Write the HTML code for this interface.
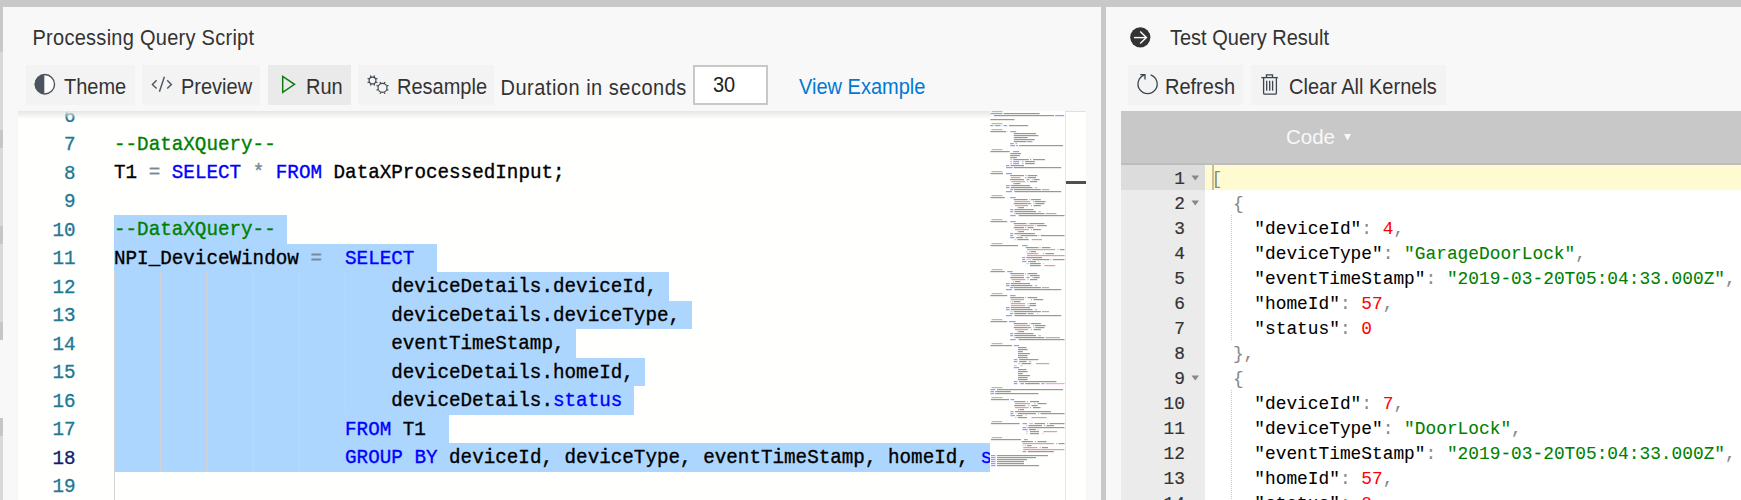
<!DOCTYPE html>
<html><head><meta charset="utf-8">
<style>
*{margin:0;padding:0;box-sizing:border-box}
html,body{width:1741px;height:500px;overflow:hidden;background:#c8c8c8;font-family:"Liberation Sans",sans-serif}
.abs{position:absolute}
.panel{position:absolute;background:#f8f8f8}
.t{position:absolute;font-size:20px;line-height:20px;color:#333;white-space:nowrap;transform:scaleY(1.1);transform-origin:0 17px}
.btn{position:absolute;background:#f3f3f3;height:40px;top:65px}
.ed{position:absolute;left:18px;top:111px;width:1068px;height:389px;background:#fffffe;overflow:hidden}
.code{position:absolute;-webkit-text-stroke:0.35px currentColor;transform:scaleY(1.07);transform-origin:0 0;font-family:"Liberation Mono",monospace;font-size:19.25px;line-height:28.5px;white-space:pre;color:#000}
.ln{position:absolute;-webkit-text-stroke:0.3px currentColor;transform:scaleY(1.07);transform-origin:0 0;font-family:"Liberation Mono",monospace;font-size:19.2px;line-height:28.5px;color:#237893;text-align:right;width:57.5px;left:0}
.sel{position:absolute;background:#add6ff}
.guide{position:absolute;width:1px;background:#d3d3d3}
.c{color:#008000}.k{color:#0000ff}.o{color:#778899}
.rc{position:absolute;left:1121px;top:111px;width:620px;height:389px;background:#fff;overflow:hidden}
.j{position:absolute;-webkit-text-stroke:0.08px currentColor;transform:scaleY(1.08);transform-origin:0 0;font-family:"Liberation Mono",monospace;font-size:17.83px;line-height:25px;white-space:pre;color:#000}
.jn{position:absolute;-webkit-text-stroke:0.2px currentColor;transform:scaleY(1.08);transform-origin:0 0;font-family:"Liberation Mono",monospace;font-size:17.83px;line-height:25px;color:#333;text-align:right;width:64px;left:0}
.act{color:#0b216f}
.p{color:#888}.n{color:#ff0000}.s{color:#008000}
</style></head><body>
<!-- left scroll strip -->
<div class="abs" style="left:0;top:52px;width:3px;height:78px;background:#d9d9d9"></div><div class="abs" style="left:0;top:130px;width:3px;height:18px;background:#c6c6c6"></div><div class="abs" style="left:0;top:148px;width:3px;height:78px;background:#d9d9d9"></div><div class="abs" style="left:0;top:226px;width:3px;height:18px;background:#c6c6c6"></div><div class="abs" style="left:0;top:244px;width:3px;height:78px;background:#d9d9d9"></div><div class="abs" style="left:0;top:322px;width:3px;height:18px;background:#c6c6c6"></div><div class="abs" style="left:0;top:340px;width:3px;height:78px;background:#f8f8f8"></div><div class="abs" style="left:0;top:418px;width:3px;height:18px;background:#c6c6c6"></div><div class="abs" style="left:0;top:436px;width:3px;height:64px;background:#d9d9d9"></div>
<!-- left panel -->
<div class="panel" style="left:3px;top:7px;width:1098px;height:493px"></div>
<!-- right panel -->
<div class="panel" style="left:1106px;top:7px;width:635px;height:493px"></div>

<div class="t" style="left:32.5px;top:27.5px;letter-spacing:0.27px">Processing Query Script</div>

<div class="btn" style="left:26px;width:109px"></div>
<div class="btn" style="left:142px;width:118px"></div>
<div class="btn" style="left:268px;width:83px;background:#eaeaea"></div>
<div class="btn" style="left:358px;width:136px"></div>

<div class="t" style="left:64px;top:76.7px">Theme</div>
<div class="t" style="left:181px;top:76.7px">Preview</div>
<div class="t" style="left:306px;top:76.7px">Run</div>
<div class="t" style="left:397px;top:76.7px">Resample</div>
<div class="t" style="left:500.5px;top:77.5px;letter-spacing:0.5px">Duration in seconds</div>
<div class="abs" style="left:693px;top:65px;width:75px;height:40px;background:#fff;border:2px solid #c8c8c8"></div>
<div class="t" style="left:713px;top:75px;color:#222">30</div>
<div class="t" style="left:799px;top:76.7px;color:#0078d4">View Example</div>




<!-- editor -->
<div class="ed">
<!--ED-->
<div class="sel" style="left:96px;top:104.00px;width:173.28px;height:28.6px"></div>
<div class="sel" style="left:96px;top:132.50px;width:323.46px;height:28.6px"></div>
<div class="sel" style="left:96px;top:161.00px;width:554.50px;height:28.6px"></div>
<div class="sel" style="left:96px;top:189.50px;width:577.60px;height:28.6px"></div>
<div class="sel" style="left:96px;top:218.00px;width:462.08px;height:28.6px"></div>
<div class="sel" style="left:96px;top:246.50px;width:531.39px;height:28.6px"></div>
<div class="sel" style="left:96px;top:275.00px;width:519.84px;height:28.6px"></div>
<div class="sel" style="left:96px;top:303.50px;width:335.01px;height:28.6px"></div>
<div class="sel" style="left:96px;top:332.00px;width:924.16px;height:28.6px"></div>
<div class="guide" style="left:96.00px;top:161.00px;height:28.6px"></div>
<div class="guide" style="left:142.20px;top:161.00px;height:28.6px"></div>
<div class="guide" style="left:188.40px;top:161.00px;height:28.6px"></div>
<div class="guide" style="left:234.60px;top:161.00px;height:28.6px"></div>
<div class="guide" style="left:280.80px;top:161.00px;height:28.6px"></div>
<div class="guide" style="left:327.00px;top:161.00px;height:28.6px"></div>
<div class="guide" style="left:96.00px;top:189.50px;height:28.6px"></div>
<div class="guide" style="left:142.20px;top:189.50px;height:28.6px"></div>
<div class="guide" style="left:188.40px;top:189.50px;height:28.6px"></div>
<div class="guide" style="left:234.60px;top:189.50px;height:28.6px"></div>
<div class="guide" style="left:280.80px;top:189.50px;height:28.6px"></div>
<div class="guide" style="left:327.00px;top:189.50px;height:28.6px"></div>
<div class="guide" style="left:96.00px;top:218.00px;height:28.6px"></div>
<div class="guide" style="left:142.20px;top:218.00px;height:28.6px"></div>
<div class="guide" style="left:188.40px;top:218.00px;height:28.6px"></div>
<div class="guide" style="left:234.60px;top:218.00px;height:28.6px"></div>
<div class="guide" style="left:280.80px;top:218.00px;height:28.6px"></div>
<div class="guide" style="left:327.00px;top:218.00px;height:28.6px"></div>
<div class="guide" style="left:96.00px;top:246.50px;height:28.6px"></div>
<div class="guide" style="left:142.20px;top:246.50px;height:28.6px"></div>
<div class="guide" style="left:188.40px;top:246.50px;height:28.6px"></div>
<div class="guide" style="left:234.60px;top:246.50px;height:28.6px"></div>
<div class="guide" style="left:280.80px;top:246.50px;height:28.6px"></div>
<div class="guide" style="left:327.00px;top:246.50px;height:28.6px"></div>
<div class="guide" style="left:96.00px;top:275.00px;height:28.6px"></div>
<div class="guide" style="left:142.20px;top:275.00px;height:28.6px"></div>
<div class="guide" style="left:188.40px;top:275.00px;height:28.6px"></div>
<div class="guide" style="left:234.60px;top:275.00px;height:28.6px"></div>
<div class="guide" style="left:280.80px;top:275.00px;height:28.6px"></div>
<div class="guide" style="left:327.00px;top:275.00px;height:28.6px"></div>
<div class="guide" style="left:96.00px;top:303.50px;height:28.6px"></div>
<div class="guide" style="left:142.20px;top:303.50px;height:28.6px"></div>
<div class="guide" style="left:188.40px;top:303.50px;height:28.6px"></div>
<div class="guide" style="left:234.60px;top:303.50px;height:28.6px"></div>
<div class="guide" style="left:280.80px;top:303.50px;height:28.6px"></div>
<div class="guide" style="left:96.00px;top:332.00px;height:28.6px"></div>
<div class="guide" style="left:142.20px;top:332.00px;height:28.6px"></div>
<div class="guide" style="left:188.40px;top:332.00px;height:28.6px"></div>
<div class="guide" style="left:234.60px;top:332.00px;height:28.6px"></div>
<div class="guide" style="left:280.80px;top:332.00px;height:28.6px"></div>
<div class="guide" style="left:96.00px;top:360.50px;height:28.6px"></div>
<div class="guide" style="left:96.00px;top:389.00px;height:28.6px"></div>
<div class="ln" style="top:-9.50px">6</div>
<div class="ln" style="top:19.00px">7</div>
<div class="ln" style="top:47.50px">8</div>
<div class="ln" style="top:76.00px">9</div>
<div class="ln" style="top:104.50px">10</div>
<div class="ln" style="top:133.00px">11</div>
<div class="ln" style="top:161.50px">12</div>
<div class="ln" style="top:190.00px">13</div>
<div class="ln" style="top:218.50px">14</div>
<div class="ln" style="top:247.00px">15</div>
<div class="ln" style="top:275.50px">16</div>
<div class="ln" style="top:304.00px">17</div>
<div class="ln act" style="top:332.50px">18</div>
<div class="ln" style="top:361.00px">19</div>
<div class="ln" style="top:389.50px">20</div>
<div class="code" style="left:96px;top:18.50px"><span class="c">--DataXQuery--</span></div>
<div class="code" style="left:96px;top:47.00px">T1 <span class="o">=</span> <span class="k">SELECT</span> <span class="o">*</span> <span class="k">FROM</span> DataXProcessedInput;</div>
<div class="code" style="left:96px;top:104.00px"><span class="c">--DataXQuery--</span></div>
<div class="code" style="left:96px;top:132.50px">NPI_DeviceWindow <span class="o">=</span>  <span class="k">SELECT</span></div>
<div class="code" style="left:96px;top:161.00px">                        deviceDetails.deviceId,</div>
<div class="code" style="left:96px;top:189.50px">                        deviceDetails.deviceType,</div>
<div class="code" style="left:96px;top:218.00px">                        eventTimeStamp,</div>
<div class="code" style="left:96px;top:246.50px">                        deviceDetails.homeId,</div>
<div class="code" style="left:96px;top:275.00px">                        deviceDetails.<span class="k">status</span></div>
<div class="code" style="left:96px;top:303.50px">                    <span class="k">FROM</span> T1</div>
<div class="code" style="left:96px;top:332.00px">                    <span class="k">GROUP</span> <span class="k">BY</span> deviceId, deviceType, eventTimeStamp, homeId, <span class="k">status</span></div>
<div class="abs" style="left:972px;top:0;width:75px;height:389px;background:#fffffe"></div><svg class="abs" style="left:972px;top:0" width="75" height="389"><g opacity="0.4"><rect x="1.6" y="0.0" width="10.8" height="1.2" fill="#008000"/><rect x="0.4" y="2.0" width="12.0" height="1.2" fill="#0000ff"/><rect x="13.6" y="2.0" width="36.0" height="1.2" fill="#000000"/><rect x="4.0" y="4.0" width="60.0" height="1.2" fill="#000000"/><rect x="65.2" y="4.0" width="9.0" height="1.2" fill="#0000ff"/><rect x="0.4" y="8.0" width="24.0" height="1.2" fill="#000000"/><rect x="1.6" y="12.0" width="10.8" height="1.2" fill="#008000"/><rect x="0.4" y="14.0" width="2.4" height="1.2" fill="#000000"/><rect x="3.4" y="14.0" width="1.2" height="1.2" fill="#778899"/><rect x="5.2" y="14.0" width="5.4" height="1.2" fill="#0000ff"/><rect x="11.8" y="14.0" width="0.6" height="1.2" fill="#778899"/><rect x="13.6" y="14.0" width="3.6" height="1.2" fill="#0000ff"/><rect x="19.0" y="14.0" width="19.2" height="1.2" fill="#000000"/><rect x="1.6" y="18.0" width="10.8" height="1.2" fill="#008000"/><rect x="0.4" y="20.0" width="15.6" height="1.2" fill="#000000"/><rect x="17.2" y="20.0" width="0.6" height="1.2" fill="#778899"/><rect x="20.2" y="20.0" width="6.0" height="1.2" fill="#0000ff"/><rect x="23.8" y="22.0" width="22.2" height="1.2" fill="#000000"/><rect x="23.8" y="24.0" width="24.6" height="1.2" fill="#000000"/><rect x="23.8" y="26.0" width="13.8" height="1.2" fill="#000000"/><rect x="23.8" y="28.0" width="21.0" height="1.2" fill="#000000"/><rect x="23.8" y="30.0" width="12.6" height="1.2" fill="#000000"/><rect x="37.0" y="30.0" width="5.4" height="1.2" fill="#0000ff"/><rect x="20.2" y="32.0" width="3.6" height="1.2" fill="#0000ff"/><rect x="25.6" y="32.0" width="1.2" height="1.2" fill="#000000"/><rect x="20.2" y="34.0" width="4.8" height="1.2" fill="#0000ff"/><rect x="26.2" y="34.0" width="1.8" height="1.2" fill="#0000ff"/><rect x="29.2" y="34.0" width="43.8" height="1.2" fill="#000000"/><rect x="1.6" y="38.0" width="10.8" height="1.2" fill="#008000"/><rect x="0.4" y="40.0" width="19.2" height="1.2" fill="#000000"/><rect x="23.2" y="40.0" width="6.0" height="1.2" fill="#0000ff"/><rect x="20.2" y="42.0" width="10.8" height="1.2" fill="#000000"/><rect x="20.2" y="44.0" width="9.6" height="1.2" fill="#000000"/><rect x="20.2" y="46.0" width="6.6" height="1.2" fill="#000000"/><rect x="20.2" y="48.0" width="1.8" height="1.2" fill="#ff00ff"/><rect x="23.2" y="48.0" width="15.6" height="1.2" fill="#000000"/><rect x="40.0" y="48.0" width="1.2" height="1.2" fill="#0000ff"/><rect x="43.0" y="48.0" width="12.0" height="1.2" fill="#000000"/><rect x="20.2" y="50.0" width="1.8" height="1.2" fill="#ff00ff"/><rect x="23.2" y="50.0" width="6.0" height="1.2" fill="#0000ff"/><rect x="32.2" y="50.0" width="1.2" height="1.2" fill="#0000ff"/><rect x="35.2" y="50.0" width="9.6" height="1.2" fill="#000000"/><rect x="20.2" y="52.0" width="1.8" height="1.2" fill="#ff00ff"/><rect x="23.2" y="52.0" width="6.0" height="1.2" fill="#0000ff"/><rect x="32.2" y="52.0" width="1.2" height="1.2" fill="#0000ff"/><rect x="35.2" y="52.0" width="9.6" height="1.2" fill="#000000"/><rect x="16.0" y="54.0" width="3.6" height="1.2" fill="#0000ff"/><rect x="20.8" y="54.0" width="13.2" height="1.2" fill="#000000"/><rect x="16.0" y="56.0" width="6.6" height="1.2" fill="#0000ff"/><rect x="23.8" y="56.0" width="47.4" height="1.2" fill="#000000"/><rect x="1.6" y="60.0" width="10.8" height="1.2" fill="#008000"/><rect x="0.4" y="62.0" width="12.6" height="1.2" fill="#000000"/><rect x="16.0" y="62.0" width="6.0" height="1.2" fill="#0000ff"/><rect x="20.2" y="64.0" width="13.8" height="1.2" fill="#000000"/><rect x="35.2" y="64.0" width="1.2" height="1.2" fill="#0000ff"/><rect x="37.6" y="64.0" width="9.6" height="1.2" fill="#000000"/><rect x="20.8" y="66.0" width="9.6" height="1.2" fill="#a31515"/><rect x="35.2" y="66.0" width="1.2" height="1.2" fill="#0000ff"/><rect x="37.6" y="66.0" width="8.4" height="1.2" fill="#000000"/><rect x="20.2" y="68.0" width="13.8" height="1.2" fill="#000000"/><rect x="36.4" y="68.0" width="3.0" height="1.2" fill="#0000ff"/><rect x="41.8" y="68.0" width="0.8" height="1.2" fill="#0000ff"/><rect x="43.6" y="68.0" width="6.0" height="1.2" fill="#000000"/><rect x="21.4" y="70.0" width="13.8" height="1.2" fill="#a31515"/><rect x="37.6" y="70.0" width="0.8" height="1.2" fill="#0000ff"/><rect x="40.0" y="70.0" width="7.2" height="1.2" fill="#000000"/><rect x="23.2" y="72.0" width="0.8" height="1.2" fill="#0000ff"/><rect x="24.4" y="72.0" width="6.0" height="1.2" fill="#000000"/><rect x="16.0" y="74.0" width="3.6" height="1.2" fill="#0000ff"/><rect x="20.8" y="74.0" width="19.2" height="1.2" fill="#000000"/><rect x="16.0" y="76.0" width="3.6" height="1.2" fill="#0000ff"/><rect x="20.8" y="76.0" width="21.6" height="1.2" fill="#000000"/><rect x="44.8" y="76.0" width="2.4" height="1.2" fill="#09885a"/><rect x="20.2" y="78.0" width="3.0" height="1.2" fill="#0000ff"/><rect x="23.8" y="78.0" width="27.0" height="1.2" fill="#000000"/><rect x="52.0" y="78.0" width="7.2" height="1.2" fill="#a31515"/><rect x="16.0" y="80.0" width="6.0" height="1.2" fill="#0000ff"/><rect x="24.4" y="80.0" width="46.8" height="1.2" fill="#000000"/><rect x="1.6" y="84.0" width="10.8" height="1.2" fill="#008000"/><rect x="0.4" y="86.0" width="14.4" height="1.2" fill="#000000"/><rect x="20.2" y="86.0" width="5.4" height="1.2" fill="#0000ff"/><rect x="23.8" y="88.0" width="13.8" height="1.2" fill="#000000"/><rect x="39.4" y="88.0" width="0.8" height="1.2" fill="#0000ff"/><rect x="41.2" y="88.0" width="9.6" height="1.2" fill="#000000"/><rect x="24.4" y="90.0" width="15.6" height="1.2" fill="#a31515"/><rect x="43.0" y="90.0" width="0.8" height="1.2" fill="#0000ff"/><rect x="44.8" y="90.0" width="10.8" height="1.2" fill="#000000"/><rect x="23.8" y="92.0" width="13.8" height="1.2" fill="#000000"/><rect x="37.6" y="92.0" width="3.6" height="1.2" fill="#0000ff"/><rect x="43.6" y="92.0" width="0.8" height="1.2" fill="#0000ff"/><rect x="45.4" y="92.0" width="9.0" height="1.2" fill="#000000"/><rect x="25.0" y="94.0" width="13.2" height="1.2" fill="#a31515"/><rect x="41.2" y="94.0" width="0.8" height="1.2" fill="#0000ff"/><rect x="43.6" y="94.0" width="7.2" height="1.2" fill="#000000"/><rect x="27.4" y="96.0" width="0.8" height="1.2" fill="#0000ff"/><rect x="28.6" y="96.0" width="5.4" height="1.2" fill="#000000"/><rect x="20.2" y="98.0" width="3.0" height="1.2" fill="#0000ff"/><rect x="24.4" y="98.0" width="19.2" height="1.2" fill="#000000"/><rect x="20.2" y="100.0" width="3.0" height="1.2" fill="#0000ff"/><rect x="24.4" y="100.0" width="21.6" height="1.2" fill="#000000"/><rect x="48.4" y="100.0" width="2.4" height="1.2" fill="#09885a"/><rect x="24.4" y="102.0" width="0.8" height="1.2" fill="#0000ff"/><rect x="25.6" y="102.0" width="28.8" height="1.2" fill="#000000"/><rect x="55.6" y="102.0" width="10.8" height="1.2" fill="#a31515"/><rect x="20.2" y="104.0" width="5.4" height="1.2" fill="#0000ff"/><rect x="28.6" y="104.0" width="45.9" height="1.2" fill="#000000"/><rect x="1.6" y="108.0" width="10.8" height="1.2" fill="#008000"/><rect x="0.4" y="110.0" width="16.8" height="1.2" fill="#000000"/><rect x="20.2" y="110.0" width="5.4" height="1.2" fill="#0000ff"/><rect x="23.8" y="112.0" width="12.6" height="1.2" fill="#000000"/><rect x="37.6" y="112.0" width="0.8" height="1.2" fill="#0000ff"/><rect x="39.4" y="112.0" width="15.0" height="1.2" fill="#000000"/><rect x="24.4" y="114.0" width="19.2" height="1.2" fill="#a31515"/><rect x="44.8" y="114.0" width="0.8" height="1.2" fill="#0000ff"/><rect x="47.2" y="114.0" width="9.6" height="1.2" fill="#000000"/><rect x="23.8" y="116.0" width="10.2" height="1.2" fill="#000000"/><rect x="35.2" y="116.0" width="0.8" height="1.2" fill="#0000ff"/><rect x="37.6" y="116.0" width="6.0" height="1.2" fill="#000000"/><rect x="25.0" y="118.0" width="13.8" height="1.2" fill="#a31515"/><rect x="41.2" y="118.0" width="0.8" height="1.2" fill="#0000ff"/><rect x="43.0" y="118.0" width="7.8" height="1.2" fill="#000000"/><rect x="27.4" y="120.0" width="0.8" height="1.2" fill="#0000ff"/><rect x="28.6" y="120.0" width="5.4" height="1.2" fill="#000000"/><rect x="20.2" y="122.0" width="3.0" height="1.2" fill="#0000ff"/><rect x="24.4" y="122.0" width="20.4" height="1.2" fill="#000000"/><rect x="20.2" y="124.0" width="3.0" height="1.2" fill="#0000ff"/><rect x="27.4" y="124.0" width="1.8" height="1.2" fill="#778899"/><rect x="30.4" y="124.0" width="16.8" height="1.2" fill="#000000"/><rect x="48.4" y="124.0" width="0.8" height="1.2" fill="#0000ff"/><rect x="50.8" y="124.0" width="23.7" height="1.2" fill="#000000"/><rect x="20.2" y="126.0" width="4.2" height="1.2" fill="#0000ff"/><rect x="26.2" y="126.0" width="6.6" height="1.2" fill="#000000"/><rect x="35.2" y="126.0" width="2.4" height="1.2" fill="#09885a"/><rect x="24.4" y="128.0" width="1.8" height="1.2" fill="#778899"/><rect x="27.4" y="128.0" width="11.4" height="1.2" fill="#000000"/><rect x="41.8" y="128.0" width="10.2" height="1.2" fill="#a31515"/><rect x="1.6" y="132.0" width="10.8" height="1.2" fill="#008000"/><rect x="0.4" y="134.0" width="27.6" height="1.2" fill="#000000"/><rect x="32.2" y="134.0" width="5.4" height="1.2" fill="#0000ff"/><rect x="35.8" y="136.0" width="12.6" height="1.2" fill="#000000"/><rect x="49.6" y="136.0" width="0.8" height="1.2" fill="#0000ff"/><rect x="52.0" y="136.0" width="8.4" height="1.2" fill="#000000"/><rect x="37.0" y="138.0" width="28.2" height="1.2" fill="#a31515"/><rect x="67.6" y="138.0" width="0.8" height="1.2" fill="#0000ff"/><rect x="70.0" y="138.0" width="4.5" height="1.2" fill="#000000"/><rect x="36.4" y="140.0" width="0.8" height="1.2" fill="#09885a"/><rect x="38.8" y="140.0" width="0.8" height="1.2" fill="#0000ff"/><rect x="40.6" y="140.0" width="5.4" height="1.2" fill="#000000"/><rect x="37.0" y="142.0" width="11.4" height="1.2" fill="#a31515"/><rect x="53.2" y="142.0" width="0.8" height="1.2" fill="#0000ff"/><rect x="55.6" y="142.0" width="8.4" height="1.2" fill="#000000"/><rect x="37.0" y="144.0" width="37.5" height="1.2" fill="#a31515"/><rect x="32.2" y="146.0" width="3.0" height="1.2" fill="#0000ff"/><rect x="36.4" y="146.0" width="15.6" height="1.2" fill="#000000"/><rect x="32.2" y="148.0" width="3.0" height="1.2" fill="#0000ff"/><rect x="36.4" y="148.0" width="4.8" height="1.2" fill="#778899"/><rect x="42.4" y="148.0" width="16.8" height="1.2" fill="#000000"/><rect x="60.4" y="148.0" width="0.8" height="1.2" fill="#0000ff"/><rect x="62.8" y="148.0" width="11.7" height="1.2" fill="#000000"/><rect x="32.2" y="150.0" width="4.2" height="1.2" fill="#0000ff"/><rect x="38.2" y="150.0" width="7.8" height="1.2" fill="#000000"/><rect x="48.4" y="150.0" width="0.8" height="1.2" fill="#09885a"/><rect x="36.4" y="152.0" width="2.4" height="1.2" fill="#778899"/><rect x="40.0" y="152.0" width="10.8" height="1.2" fill="#000000"/><rect x="53.2" y="152.0" width="0.8" height="1.2" fill="#09885a"/><rect x="40.0" y="154.0" width="10.8" height="1.2" fill="#000000"/><rect x="54.4" y="154.0" width="10.8" height="1.2" fill="#a31515"/><rect x="1.6" y="158.0" width="10.8" height="1.2" fill="#008000"/><rect x="0.4" y="160.0" width="14.4" height="1.2" fill="#000000"/><rect x="17.2" y="160.0" width="5.4" height="1.2" fill="#0000ff"/><rect x="20.2" y="162.0" width="13.8" height="1.2" fill="#000000"/><rect x="35.2" y="162.0" width="0.8" height="1.2" fill="#0000ff"/><rect x="37.6" y="162.0" width="9.6" height="1.2" fill="#000000"/><rect x="21.4" y="164.0" width="12.6" height="1.2" fill="#a31515"/><rect x="37.6" y="164.0" width="0.8" height="1.2" fill="#0000ff"/><rect x="40.0" y="164.0" width="9.6" height="1.2" fill="#000000"/><rect x="20.2" y="166.0" width="13.8" height="1.2" fill="#000000"/><rect x="36.4" y="166.0" width="3.0" height="1.2" fill="#0000ff"/><rect x="41.8" y="166.0" width="0.8" height="1.2" fill="#0000ff"/><rect x="43.6" y="166.0" width="6.0" height="1.2" fill="#000000"/><rect x="21.4" y="168.0" width="13.8" height="1.2" fill="#a31515"/><rect x="37.6" y="168.0" width="0.8" height="1.2" fill="#0000ff"/><rect x="40.0" y="168.0" width="7.2" height="1.2" fill="#000000"/><rect x="23.2" y="170.0" width="0.8" height="1.2" fill="#0000ff"/><rect x="25.0" y="170.0" width="5.4" height="1.2" fill="#000000"/><rect x="16.0" y="172.0" width="3.6" height="1.2" fill="#0000ff"/><rect x="20.8" y="172.0" width="19.2" height="1.2" fill="#000000"/><rect x="16.0" y="174.0" width="3.6" height="1.2" fill="#0000ff"/><rect x="20.8" y="174.0" width="21.6" height="1.2" fill="#000000"/><rect x="44.8" y="174.0" width="2.4" height="1.2" fill="#09885a"/><rect x="20.2" y="176.0" width="3.0" height="1.2" fill="#0000ff"/><rect x="23.8" y="176.0" width="27.0" height="1.2" fill="#000000"/><rect x="52.0" y="176.0" width="7.2" height="1.2" fill="#a31515"/><rect x="16.0" y="178.0" width="6.0" height="1.2" fill="#0000ff"/><rect x="24.4" y="178.0" width="46.8" height="1.2" fill="#000000"/><rect x="1.6" y="182.0" width="10.8" height="1.2" fill="#008000"/><rect x="0.4" y="184.0" width="16.8" height="1.2" fill="#000000"/><rect x="20.2" y="184.0" width="5.4" height="1.2" fill="#0000ff"/><rect x="20.2" y="186.0" width="13.8" height="1.2" fill="#000000"/><rect x="35.2" y="186.0" width="0.8" height="1.2" fill="#0000ff"/><rect x="37.6" y="186.0" width="9.6" height="1.2" fill="#000000"/><rect x="20.8" y="188.0" width="13.2" height="1.2" fill="#a31515"/><rect x="41.2" y="188.0" width="0.8" height="1.2" fill="#0000ff"/><rect x="43.6" y="188.0" width="9.6" height="1.2" fill="#000000"/><rect x="20.2" y="190.0" width="0.8" height="1.2" fill="#09885a"/><rect x="22.0" y="190.0" width="0.8" height="1.2" fill="#0000ff"/><rect x="23.8" y="190.0" width="6.6" height="1.2" fill="#000000"/><rect x="20.8" y="192.0" width="14.4" height="1.2" fill="#a31515"/><rect x="37.6" y="192.0" width="0.8" height="1.2" fill="#0000ff"/><rect x="39.4" y="192.0" width="6.6" height="1.2" fill="#000000"/><rect x="20.8" y="194.0" width="14.4" height="1.2" fill="#a31515"/><rect x="37.6" y="194.0" width="0.8" height="1.2" fill="#0000ff"/><rect x="39.4" y="194.0" width="6.6" height="1.2" fill="#000000"/><rect x="16.0" y="196.0" width="3.6" height="1.2" fill="#0000ff"/><rect x="20.8" y="196.0" width="19.2" height="1.2" fill="#000000"/><rect x="16.0" y="198.0" width="3.6" height="1.2" fill="#0000ff"/><rect x="20.8" y="198.0" width="21.6" height="1.2" fill="#000000"/><rect x="44.8" y="198.0" width="2.4" height="1.2" fill="#09885a"/><rect x="20.2" y="200.0" width="2.4" height="1.2" fill="#778899"/><rect x="23.8" y="200.0" width="27.0" height="1.2" fill="#000000"/><rect x="52.0" y="200.0" width="7.2" height="1.2" fill="#a31515"/><rect x="20.2" y="202.0" width="3.0" height="1.2" fill="#0000ff"/><rect x="24.4" y="202.0" width="12.0" height="1.2" fill="#000000"/><rect x="37.6" y="202.0" width="6.0" height="1.2" fill="#0000ff"/><rect x="47.2" y="202.0" width="0.8" height="1.2" fill="#09885a"/><rect x="16.0" y="204.0" width="6.0" height="1.2" fill="#0000ff"/><rect x="24.4" y="204.0" width="46.8" height="1.2" fill="#000000"/><rect x="1.6" y="208.0" width="10.8" height="1.2" fill="#008000"/><rect x="0.4" y="210.0" width="16.8" height="1.2" fill="#000000"/><rect x="19.0" y="210.0" width="6.6" height="1.2" fill="#0000ff"/><rect x="23.8" y="212.0" width="13.8" height="1.2" fill="#000000"/><rect x="39.4" y="212.0" width="0.8" height="1.2" fill="#0000ff"/><rect x="41.2" y="212.0" width="9.6" height="1.2" fill="#000000"/><rect x="24.4" y="214.0" width="15.6" height="1.2" fill="#a31515"/><rect x="43.0" y="214.0" width="0.8" height="1.2" fill="#0000ff"/><rect x="44.8" y="214.0" width="10.8" height="1.2" fill="#000000"/><rect x="23.8" y="216.0" width="13.8" height="1.2" fill="#000000"/><rect x="37.6" y="216.0" width="3.6" height="1.2" fill="#0000ff"/><rect x="43.6" y="216.0" width="0.8" height="1.2" fill="#0000ff"/><rect x="45.4" y="216.0" width="9.0" height="1.2" fill="#000000"/><rect x="25.0" y="218.0" width="13.2" height="1.2" fill="#a31515"/><rect x="41.2" y="218.0" width="0.8" height="1.2" fill="#0000ff"/><rect x="43.6" y="218.0" width="7.2" height="1.2" fill="#000000"/><rect x="27.4" y="220.0" width="0.8" height="1.2" fill="#0000ff"/><rect x="28.6" y="220.0" width="5.4" height="1.2" fill="#000000"/><rect x="20.2" y="222.0" width="3.0" height="1.2" fill="#0000ff"/><rect x="24.4" y="222.0" width="19.2" height="1.2" fill="#000000"/><rect x="20.2" y="224.0" width="3.0" height="1.2" fill="#0000ff"/><rect x="24.4" y="224.0" width="21.6" height="1.2" fill="#000000"/><rect x="48.4" y="224.0" width="2.4" height="1.2" fill="#09885a"/><rect x="24.4" y="226.0" width="0.8" height="1.2" fill="#0000ff"/><rect x="25.6" y="226.0" width="28.8" height="1.2" fill="#000000"/><rect x="55.6" y="226.0" width="14.4" height="1.2" fill="#a31515"/><rect x="20.2" y="228.0" width="5.4" height="1.2" fill="#0000ff"/><rect x="28.6" y="228.0" width="45.9" height="1.2" fill="#000000"/><rect x="1.6" y="232.0" width="10.8" height="1.2" fill="#008000"/><rect x="0.4" y="234.0" width="21.6" height="1.2" fill="#000000"/><rect x="23.8" y="234.0" width="5.4" height="1.2" fill="#0000ff"/><rect x="28.0" y="236.0" width="8.4" height="1.2" fill="#000000"/><rect x="28.0" y="238.0" width="9.6" height="1.2" fill="#000000"/><rect x="28.0" y="240.0" width="4.8" height="1.2" fill="#000000"/><rect x="28.0" y="242.0" width="12.0" height="1.2" fill="#000000"/><rect x="28.0" y="244.0" width="9.6" height="1.2" fill="#000000"/><rect x="28.0" y="246.0" width="9.6" height="1.2" fill="#000000"/><rect x="23.8" y="248.0" width="3.6" height="1.2" fill="#0000ff"/><rect x="29.2" y="248.0" width="19.2" height="1.2" fill="#000000"/><rect x="23.8" y="250.0" width="3.6" height="1.2" fill="#0000ff"/><rect x="29.2" y="250.0" width="7.2" height="1.2" fill="#000000"/><rect x="38.8" y="250.0" width="2.4" height="1.2" fill="#09885a"/><rect x="28.0" y="252.0" width="2.4" height="1.2" fill="#778899"/><rect x="31.6" y="252.0" width="9.6" height="1.2" fill="#000000"/><rect x="46.0" y="252.0" width="13.2" height="1.2" fill="#a31515"/><rect x="23.8" y="254.0" width="3.0" height="1.2" fill="#778899"/><rect x="30.4" y="254.0" width="2.4" height="1.2" fill="#778899"/><rect x="23.8" y="256.0" width="5.4" height="1.2" fill="#0000ff"/><rect x="28.0" y="258.0" width="8.4" height="1.2" fill="#000000"/><rect x="28.0" y="260.0" width="9.6" height="1.2" fill="#000000"/><rect x="28.0" y="262.0" width="4.8" height="1.2" fill="#000000"/><rect x="28.0" y="264.0" width="12.0" height="1.2" fill="#000000"/><rect x="28.0" y="266.0" width="9.6" height="1.2" fill="#000000"/><rect x="28.0" y="268.0" width="9.6" height="1.2" fill="#000000"/><rect x="23.8" y="270.0" width="3.6" height="1.2" fill="#0000ff"/><rect x="29.2" y="270.0" width="37.2" height="1.2" fill="#000000"/><rect x="23.8" y="272.0" width="3.6" height="1.2" fill="#0000ff"/><rect x="30.4" y="272.0" width="3.6" height="1.2" fill="#0000ff"/><rect x="35.2" y="272.0" width="14.4" height="1.2" fill="#000000"/><rect x="51.4" y="272.0" width="3.0" height="1.2" fill="#0000ff"/><rect x="55.6" y="272.0" width="18.9" height="1.2" fill="#ff00ff"/><rect x="1.6" y="276.0" width="10.8" height="1.2" fill="#008000"/><rect x="0.4" y="278.0" width="4.8" height="1.2" fill="#0000ff"/><rect x="7.0" y="278.0" width="66.0" height="1.2" fill="#000000"/><rect x="0.4" y="280.0" width="3.6" height="1.2" fill="#0000ff"/><rect x="5.2" y="280.0" width="15.6" height="1.2" fill="#000000"/><rect x="0.4" y="282.0" width="3.6" height="1.2" fill="#0000ff"/><rect x="5.2" y="282.0" width="43.2" height="1.2" fill="#000000"/><rect x="1.6" y="286.0" width="10.8" height="1.2" fill="#008000"/><rect x="1.0" y="288.0" width="18.0" height="1.2" fill="#000000"/><rect x="20.5" y="288.0" width="3.7" height="1.2" fill="#0000ff"/><rect x="24.2" y="290.0" width="11.2" height="1.2" fill="#000000"/><rect x="37.0" y="290.0" width="0.9" height="1.2" fill="#0000ff"/><rect x="40.0" y="290.0" width="9.0" height="1.2" fill="#000000"/><rect x="25.0" y="292.0" width="15.0" height="1.2" fill="#a31515"/><rect x="44.5" y="292.0" width="0.9" height="1.2" fill="#0000ff"/><rect x="47.5" y="292.0" width="9.0" height="1.2" fill="#000000"/><rect x="24.2" y="294.0" width="11.2" height="1.2" fill="#000000"/><rect x="38.5" y="294.0" width="0.9" height="1.2" fill="#0000ff"/><rect x="41.5" y="294.0" width="6.0" height="1.2" fill="#000000"/><rect x="25.0" y="296.0" width="13.5" height="1.2" fill="#a31515"/><rect x="40.0" y="296.0" width="0.9" height="1.2" fill="#0000ff"/><rect x="43.0" y="296.0" width="7.5" height="1.2" fill="#000000"/><rect x="28.0" y="298.0" width="0.9" height="1.2" fill="#0000ff"/><rect x="29.5" y="298.0" width="4.5" height="1.2" fill="#000000"/><rect x="20.5" y="300.0" width="3.0" height="1.2" fill="#0000ff"/><rect x="25.0" y="300.0" width="36.0" height="1.2" fill="#000000"/><rect x="20.5" y="302.0" width="3.0" height="1.2" fill="#0000ff"/><rect x="25.7" y="302.0" width="1.0" height="1.2" fill="#778899"/><rect x="28.0" y="302.0" width="18.0" height="1.2" fill="#000000"/><rect x="48.2" y="302.0" width="0.9" height="1.2" fill="#0000ff"/><rect x="50.5" y="302.0" width="24.0" height="1.2" fill="#000000"/><rect x="20.5" y="304.0" width="4.5" height="1.2" fill="#0000ff"/><rect x="26.5" y="304.0" width="6.0" height="1.2" fill="#000000"/><rect x="35.5" y="304.0" width="0.9" height="1.2" fill="#09885a"/><rect x="25.0" y="306.0" width="1.5" height="1.2" fill="#778899"/><rect x="28.0" y="306.0" width="9.0" height="1.2" fill="#000000"/><rect x="41.5" y="306.0" width="15.0" height="1.2" fill="#a31515"/><rect x="1.7" y="310.0" width="10.5" height="1.2" fill="#008000"/><rect x="1.0" y="312.0" width="28.5" height="1.2" fill="#000000"/><rect x="32.5" y="312.0" width="4.5" height="1.2" fill="#0000ff"/><rect x="39.2" y="312.0" width="3.7" height="1.2" fill="#ff00ff"/><rect x="44.5" y="312.0" width="10.5" height="1.2" fill="#000000"/><rect x="57.2" y="312.0" width="0.9" height="1.2" fill="#0000ff"/><rect x="59.5" y="312.0" width="15.0" height="1.2" fill="#000000"/><rect x="36.2" y="314.0" width="1.0" height="1.2" fill="#ff00ff"/><rect x="38.5" y="314.0" width="13.5" height="1.2" fill="#000000"/><rect x="54.2" y="314.0" width="0.9" height="1.2" fill="#0000ff"/><rect x="56.5" y="314.0" width="7.5" height="1.2" fill="#000000"/><rect x="32.5" y="316.0" width="3.7" height="1.2" fill="#0000ff"/><rect x="37.7" y="316.0" width="36.7" height="1.2" fill="#000000"/><rect x="32.5" y="318.0" width="5.2" height="1.2" fill="#0000ff"/><rect x="39.2" y="318.0" width="6.7" height="1.2" fill="#000000"/><rect x="47.5" y="318.0" width="0.9" height="1.2" fill="#09885a"/><rect x="36.2" y="320.0" width="1.5" height="1.2" fill="#778899"/><rect x="40.0" y="320.0" width="9.0" height="1.2" fill="#000000"/><rect x="53.5" y="320.0" width="13.5" height="1.2" fill="#a31515"/><rect x="36.2" y="322.0" width="1.5" height="1.2" fill="#778899"/><rect x="40.0" y="322.0" width="9.0" height="1.2" fill="#000000"/><rect x="52.7" y="322.0" width="0.9" height="1.2" fill="#09885a"/><rect x="1.7" y="326.0" width="10.5" height="1.2" fill="#008000"/><rect x="1.0" y="328.0" width="30.0" height="1.2" fill="#000000"/><rect x="34.0" y="328.0" width="3.7" height="1.2" fill="#0000ff"/><rect x="31.7" y="330.0" width="11.2" height="1.2" fill="#000000"/><rect x="45.2" y="330.0" width="0.9" height="1.2" fill="#0000ff"/><rect x="47.5" y="330.0" width="9.0" height="1.2" fill="#000000"/><rect x="32.5" y="332.0" width="31.5" height="1.2" fill="#a31515"/><rect x="66.2" y="332.0" width="0.9" height="1.2" fill="#0000ff"/><rect x="68.5" y="332.0" width="6.0" height="1.2" fill="#000000"/><rect x="32.5" y="334.0" width="0.9" height="1.2" fill="#09885a"/><rect x="34.7" y="334.0" width="0.9" height="1.2" fill="#0000ff"/><rect x="37.0" y="334.0" width="4.5" height="1.2" fill="#000000"/><rect x="33.2" y="336.0" width="14.2" height="1.2" fill="#a31515"/><rect x="49.7" y="336.0" width="0.9" height="1.2" fill="#0000ff"/><rect x="52.0" y="336.0" width="6.0" height="1.2" fill="#000000"/><rect x="33.2" y="338.0" width="41.2" height="1.2" fill="#a31515"/><rect x="32.5" y="340.0" width="3.7" height="1.2" fill="#0000ff"/><rect x="37.7" y="340.0" width="26.2" height="1.2" fill="#000000"/><rect x="1.0" y="344.0" width="4.5" height="1.2" fill="#0000ff"/><rect x="7.0" y="344.0" width="51.0" height="1.2" fill="#000000"/><rect x="1.0" y="346.0" width="4.5" height="1.2" fill="#0000ff"/><rect x="7.0" y="346.0" width="39.0" height="1.2" fill="#000000"/><rect x="1.0" y="348.0" width="4.5" height="1.2" fill="#0000ff"/><rect x="7.0" y="348.0" width="30.0" height="1.2" fill="#000000"/><rect x="1.0" y="350.0" width="4.5" height="1.2" fill="#0000ff"/><rect x="7.0" y="350.0" width="27.0" height="1.2" fill="#000000"/><rect x="1.0" y="352.0" width="4.5" height="1.2" fill="#0000ff"/><rect x="7.0" y="352.0" width="27.0" height="1.2" fill="#000000"/><rect x="1.0" y="354.0" width="4.5" height="1.2" fill="#0000ff"/><rect x="7.0" y="354.0" width="42.0" height="1.2" fill="#000000"/></g></svg>
<div class="abs" style="left:0;top:0;width:972px;height:8px;background:linear-gradient(#e6e6e6,rgba(255,255,255,0))"></div>
<div class="abs" style="left:1047px;top:0;width:1px;height:389px;background:#e6e6e6"></div>
<div class="abs" style="left:1047px;top:0;width:21px;height:1px;background:#e0e0e0"></div>
<div class="abs" style="left:1048px;top:70px;width:20px;height:3px;background:#505050"></div>
<!--/ED-->
</div>
<!-- right -->
<div class="t" style="left:1170px;top:28px">Test Query Result</div>
<div class="btn" style="left:1128px;width:115px"></div>
<div class="btn" style="left:1251px;width:195px"></div>
<div class="t" style="left:1165px;top:76.7px">Refresh</div>
<div class="t" style="left:1289px;top:76.7px">Clear All Kernels</div>

<div class="rc">
<!--RC-->
<div class="abs" style="left:0;top:0;width:620px;height:52px;background:#c8c8c8"></div>
<div class="abs" style="left:0;top:52px;width:620px;height:2px;background:#bdbdbd"></div>
<div class="abs" style="left:165px;top:16px;font-size:20.5px;line-height:20px;color:#f9f9f9;font-family:'Liberation Sans',sans-serif">Code</div>
<svg class="abs" style="left:0;top:0" width="620" height="52"><path d="M223 23 L230 23 L226.5 29.5 Z" fill="#f9f9f9"/></svg>
<div class="abs" style="left:0;top:54px;width:84px;height:340px;background:#ebebeb"></div>
<div class="abs" style="left:0;top:54px;width:84px;height:25px;background:#dcdcdc"></div>
<div class="abs" style="left:84px;top:54px;width:536px;height:25px;background:#fffbd1"></div>
<div class="jn" style="top:54.5px">1</div>
<div class="jn" style="top:79.5px">2</div>
<div class="jn" style="top:104.5px">3</div>
<div class="jn" style="top:129.5px">4</div>
<div class="jn" style="top:154.5px">5</div>
<div class="jn" style="top:179.5px">6</div>
<div class="jn" style="top:204.5px">7</div>
<div class="jn" style="top:229.5px">8</div>
<div class="jn" style="top:254.5px">9</div>
<div class="jn" style="top:279.5px">10</div>
<div class="jn" style="top:304.5px">11</div>
<div class="jn" style="top:329.5px">12</div>
<div class="jn" style="top:354.5px">13</div>
<div class="jn" style="top:379.5px">14</div>
<svg class="abs" style="left:70px;top:64px" width="9" height="7"><path d="M0.5 0.5 L8 0.5 L4.25 5.5 Z" fill="#888"/></svg>
<svg class="abs" style="left:70px;top:89px" width="9" height="7"><path d="M0.5 0.5 L8 0.5 L4.25 5.5 Z" fill="#888"/></svg>
<svg class="abs" style="left:70px;top:264px" width="9" height="7"><path d="M0.5 0.5 L8 0.5 L4.25 5.5 Z" fill="#888"/></svg>
<div class="abs" style="left:90.5px;top:54px;width:2px;height:25px;background:#c9c09a"></div>
<div class="abs" style="left:109.9px;top:104px;width:0;height:125px;border-left:1px dotted #c8c8c8"></div>
<div class="abs" style="left:109.9px;top:279px;width:0;height:125px;border-left:1px dotted #c8c8c8"></div>
<div class="j" style="left:90.5px;top:54.5px"><span class="p">[</span></div>
<div class="j" style="left:90.5px;top:79.5px">  <span class="p">{</span></div>
<div class="j" style="left:90.5px;top:104.5px">    "deviceId"<span class="p">:</span> <span class="n">4</span><span class="p">,</span></div>
<div class="j" style="left:90.5px;top:129.5px">    "deviceType"<span class="p">:</span> <span class="s">"GarageDoorLock"</span><span class="p">,</span></div>
<div class="j" style="left:90.5px;top:154.5px">    "eventTimeStamp"<span class="p">:</span> <span class="s">"2019-03-20T05:04:33.000Z"</span><span class="p">,</span></div>
<div class="j" style="left:90.5px;top:179.5px">    "homeId"<span class="p">:</span> <span class="n">57</span><span class="p">,</span></div>
<div class="j" style="left:90.5px;top:204.5px">    "status"<span class="p">:</span> <span class="n">0</span></div>
<div class="j" style="left:90.5px;top:229.5px">  <span class="p">},</span></div>
<div class="j" style="left:90.5px;top:254.5px">  <span class="p">{</span></div>
<div class="j" style="left:90.5px;top:279.5px">    "deviceId"<span class="p">:</span> <span class="n">7</span><span class="p">,</span></div>
<div class="j" style="left:90.5px;top:304.5px">    "deviceType"<span class="p">:</span> <span class="s">"DoorLock"</span><span class="p">,</span></div>
<div class="j" style="left:90.5px;top:329.5px">    "eventTimeStamp"<span class="p">:</span> <span class="s">"2019-03-20T05:04:33.000Z"</span><span class="p">,</span></div>
<div class="j" style="left:90.5px;top:354.5px">    "homeId"<span class="p">:</span> <span class="n">57</span><span class="p">,</span></div>
<div class="j" style="left:90.5px;top:379.5px">    "status"<span class="p">:</span> <span class="n">0</span></div>
<!--/RC-->
</div>
<!-- icons -->
<svg class="abs" style="left:0;top:0" width="1741" height="110" viewBox="0 0 1741 110">
 <g fill="none" stroke="#4b5560" stroke-width="1.4">
  <circle cx="44.85" cy="84.25" r="9.7" fill="#fcfcfc"/>
  <path d="M44.3 74.7 A9.55 9.55 0 0 0 44.3 93.8 Z" fill="#4b5560" stroke="none"/>
  <path d="M156.6 80.2 L152.4 84.4 L156.6 88.6"/>
  <path d="M164.4 76.8 L159.4 91.8"/>
  <path d="M167.2 80.2 L171.4 84.4 L167.2 88.6"/>
 </g>
 <path d="M282.7 76.3 L282.7 92.3 L294.5 84.3 Z" fill="none" stroke="#107c10" stroke-width="1.5" stroke-linejoin="miter"/>
 <g fill="none" stroke="#3c4650" stroke-width="1.15">
  <circle cx="372.5" cy="80.5" r="3.4"/>
  <circle cx="382.5" cy="87.8" r="4.5"/>
 </g>
 <g stroke="#3c4650" stroke-width="1.3"><path d="M376.10 81.99 L377.40 82.53"/><path d="M373.99 84.10 L374.53 85.40"/><path d="M371.01 84.10 L370.47 85.40"/><path d="M368.90 81.99 L367.60 82.53"/><path d="M368.90 79.01 L367.60 78.47"/><path d="M371.01 76.90 L370.47 75.60"/><path d="M373.99 76.90 L374.53 75.60"/><path d="M376.10 79.01 L377.40 78.47"/><path d="M387.12 89.71 L388.41 90.25"/><path d="M384.41 92.42 L384.95 93.71"/><path d="M380.59 92.42 L380.05 93.71"/><path d="M377.88 89.71 L376.59 90.25"/><path d="M377.88 85.89 L376.59 85.35"/><path d="M380.59 83.18 L380.05 81.89"/><path d="M384.41 83.18 L384.95 81.89"/><path d="M387.12 85.89 L388.41 85.35"/></g>
 <circle cx="1140.3" cy="37.3" r="10.1" fill="#333"/>
 <g fill="none" stroke="#fff" stroke-width="1.4">
  <path d="M1134 37.6 L1146.4 37.6"/>
  <path d="M1140.2 31.6 L1146.4 37.6 L1140.2 43.4"/>
 </g>
 <g fill="none" stroke="#3c4650" stroke-width="1.3">
  <path d="M1150.6 74.9 A9.6 9.6 0 1 1 1144.6 74.9"/>
  <path d="M1140.2 74.6 L1145 74.6 L1145 79.4"/>
  <path d="M1261.3 77.6 L1277.8 77.6"/>
  <path d="M1266.5 77.6 L1266.5 74.8 L1272.5 74.8 L1272.5 77.6"/>
  <path d="M1263.6 77.6 L1263.6 93 Q1263.6 94.2 1264.8 94.2 L1275.2 94.2 Q1276.4 94.2 1276.4 93 L1276.4 77.6"/>
  <path d="M1266.7 80.8 L1266.7 90.7 M1269.7 80.8 L1269.7 90.7 M1272.6 80.8 L1272.6 90.7"/>
 </g>
</svg>
</body></html>
